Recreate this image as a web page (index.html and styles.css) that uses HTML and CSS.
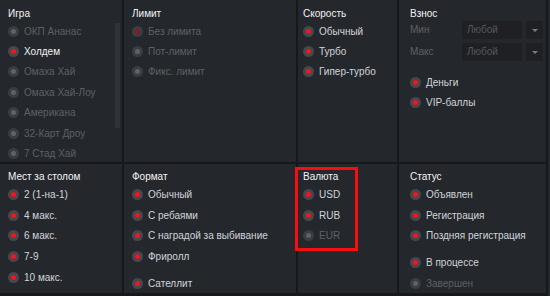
FILE: index.html
```html
<!DOCTYPE html>
<html lang="ru">
<head>
<meta charset="utf-8">
<link rel="stylesheet" href="styles.css">
</head>
<body>
<div class="panel">
  <section class="cell c1 top">
    <h3 class="title">Игра</h3>
    <ul class="list">
      <li class="opt off"><span class="radio"></span>ОКП Ананас</li>
      <li class="opt on sel"><span class="radio"></span>Холдем</li>
      <li class="opt off"><span class="radio"></span>Омаха Хай</li>
      <li class="opt off"><span class="radio"></span>Омаха Хай-Лоу</li>
      <li class="opt off"><span class="radio"></span>Американа</li>
      <li class="opt off"><span class="radio"></span>32-Карт Дроу</li>
      <li class="opt off"><span class="radio"></span>7 Стад Хай</li>
    </ul>
    <div class="scrollbar"></div>
  </section>
  <section class="cell c2 top">
    <h3 class="title">Лимит</h3>
    <ul class="list">
      <li class="opt off offsel"><span class="radio"></span>Без лимита</li>
      <li class="opt off"><span class="radio"></span>Пот-лимит</li>
      <li class="opt off"><span class="radio"></span>Фикс. лимит</li>
    </ul>
  </section>
  <section class="cell c3 top">
    <h3 class="title">Скорость</h3>
    <ul class="list">
      <li class="opt on"><span class="radio"></span>Обычный</li>
      <li class="opt on"><span class="radio"></span>Турбо</li>
      <li class="opt on"><span class="radio"></span>Гипер-турбо</li>
    </ul>
  </section>
  <section class="cell c4 top">
    <h3 class="title">Взнос</h3>
    <div class="range">
      <div class="range-row"><span class="range-label">Мин</span><span class="select">Любой</span><span class="arrow"></span></div>
      <div class="range-row"><span class="range-label">Макс</span><span class="select">Любой</span><span class="arrow"></span></div>
    </div>
    <ul class="list money">
      <li class="opt on"><span class="radio"></span>Деньги</li>
      <li class="opt on"><span class="radio"></span>VIP-баллы</li>
    </ul>
  </section>

  <section class="cell c1 bottom">
    <h3 class="title">Мест за столом</h3>
    <ul class="list">
      <li class="opt on"><span class="radio"></span>2 (1-на-1)</li>
      <li class="opt on"><span class="radio"></span>4 макс.</li>
      <li class="opt on"><span class="radio"></span>6 макс.</li>
      <li class="opt on"><span class="radio"></span>7-9</li>
      <li class="opt on"><span class="radio"></span>10 макс.</li>
    </ul>
  </section>
  <section class="cell c2 bottom">
    <h3 class="title">Формат</h3>
    <ul class="list">
      <li class="opt on"><span class="radio"></span>Обычный</li>
      <li class="opt on"><span class="radio"></span>С ребаями</li>
      <li class="opt on"><span class="radio"></span>С наградой за выбивание</li>
      <li class="opt on"><span class="radio"></span>Фриролл</li>
      <li class="opt on group"><span class="radio"></span>Сателлит</li>
    </ul>
  </section>
  <section class="cell c3 bottom">
    <h3 class="title">Валюта</h3>
    <ul class="list">
      <li class="opt on"><span class="radio"></span>USD</li>
      <li class="opt on"><span class="radio"></span>RUB</li>
      <li class="opt off"><span class="radio"></span>EUR</li>
    </ul>
    <div class="highlight"></div>
  </section>
  <section class="cell c4 bottom">
    <h3 class="title">Статус</h3>
    <ul class="list">
      <li class="opt on"><span class="radio"></span>Объявлен</li>
      <li class="opt on"><span class="radio"></span>Регистрация</li>
      <li class="opt on"><span class="radio"></span>Поздняя регистрация</li>
      <li class="opt on group"><span class="radio"></span>В процессе</li>
      <li class="opt off"><span class="radio"></span>Завершен</li>
    </ul>
  </section>
</div>
</body>
</html>
```

FILE: styles.css
```css
* { box-sizing: border-box; }
html, body {
  margin: 0;
  padding: 0;
}
body {
  width: 550px;
  height: 296px;
  background: #24272c;
  font-family: "Liberation Sans", Arial, sans-serif;
  font-size: 10px;
  overflow: hidden;
}
.panel {
  display: grid;
  grid-template-columns: 122px 172px 99px 147px;
  grid-template-rows: 162px 129px;
  gap: 2px;
  width: 548px;
  padding-right: 2px;
  padding-bottom: 4px;
  background: #16181b;
}
.cell {
  position: relative;
  background: #24272c;
}
.top { padding-top: 7px; }
.bottom { padding-top: 6px; }
.c1 { padding-left: 8px; }
.c2 { padding-left: 8px; }
.c3 { padding-left: 5px; }
.c4 { padding-left: 11px; }

.title {
  margin: 0;
  font-size: 10px;
  font-weight: normal;
  line-height: 14px;
  color: #f4f4f4;
}
.list {
  list-style: none;
  margin: 0;
  padding: 0;
}
.opt {
  display: flex;
  align-items: center;
  gap: 5px;
  white-space: nowrap;
}
.top .opt { height: 20.4px; }
.bottom .opt { height: 20.8px; }
.opt.group { margin-top: 6px; }
.opt.on { color: #d2d5da; }
.opt.off { color: #5e6166; }

.radio {
  flex: none;
  width: 11px;
  height: 11px;
  border-radius: 50%;
  background: #45484e;
  display: flex;
  align-items: center;
  justify-content: center;
}
.radio::after {
  content: "";
  width: 5px;
  height: 5px;
  border-radius: 50%;
  background: #f5141c;
}
.off .radio { background: #3a3d42; }
.off .radio::after { background: #5f6267; }
.offsel .radio::after { background: #8c1a1f; }
.sel { color: #f0f2f5 !important; }

.scrollbar {
  position: absolute;
  right: 2px;
  top: 23px;
  width: 5px;
  height: 105px;
  background: #2f3237;
}

.range {
  display: flex;
  flex-direction: column;
  gap: 4px;
}
.range-row {
  display: flex;
  align-items: stretch;
  height: 18px;
}
.range-label {
  width: 52px;
  line-height: 18px;
  color: #5e6166;
}
.select {
  width: 60px;
  padding-left: 5px;
  line-height: 18px;
  background: #1e2024;
  color: #55585d;
}
.arrow {
  position: relative;
  width: 17px;
  margin-left: 4px;
  background: #1e2024;
}
.arrow::after {
  content: "";
  position: absolute;
  left: 6px;
  top: 8px;
  border-left: 3px solid transparent;
  border-right: 3px solid transparent;
  border-top: 3px solid #7a7d82;
}
.money { margin-top: 11px; }

.highlight {
  position: absolute;
  left: -3px;
  top: 3px;
  width: 63px;
  height: 84px;
  border: 3px solid #f50f0f;
}
```
